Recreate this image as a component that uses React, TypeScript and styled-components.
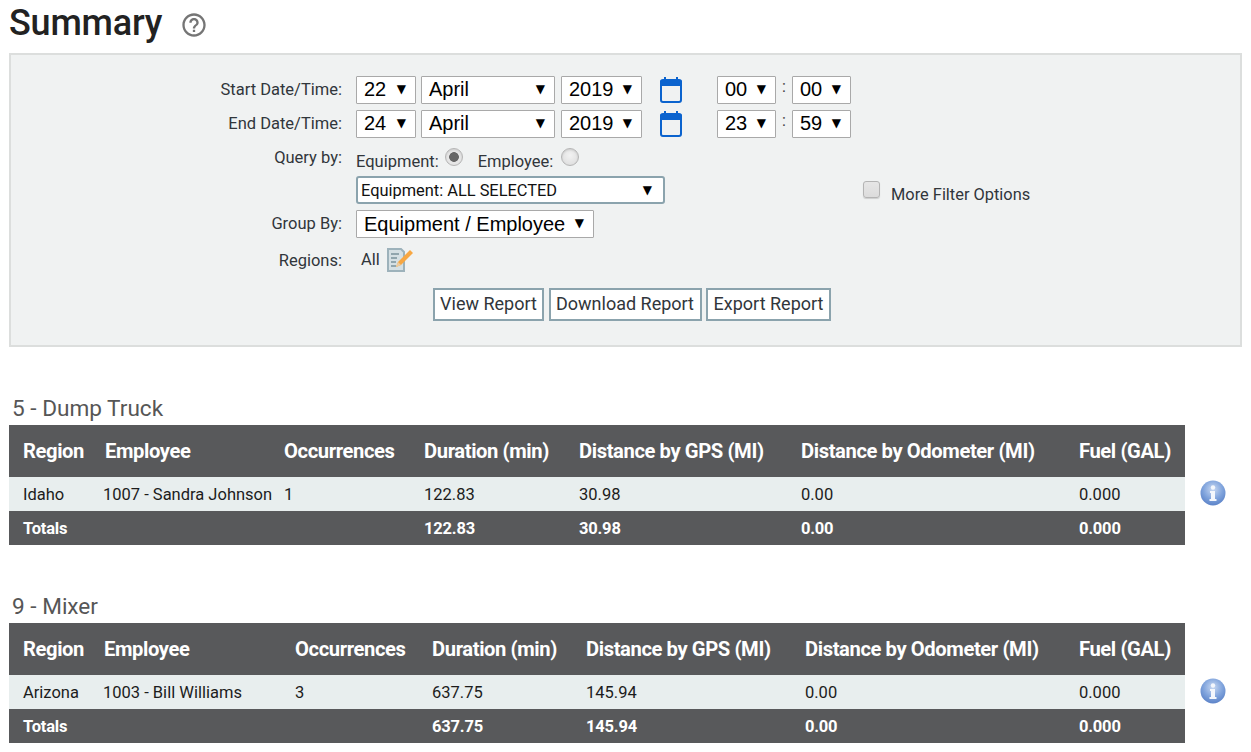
import React from "react";
import styled, { createGlobalStyle } from "styled-components";
import { MdHelpOutline } from "react-icons/md";

const Global = createGlobalStyle`
  html, body { margin: 0; padding: 0; background: #fff; overflow: hidden; }
  body { font-family: Roboto, "Liberation Sans", sans-serif; color: #31363b; }
`;
const Page = styled.div`
  width: 1251px; height: 752px; padding: 0 9px; box-sizing: border-box;
`;
const TitleBar = styled.div`
  height: 53px; display: flex; align-items: flex-start;
`;
const Title = styled.h1`
  margin: 0; font-size: 36px; line-height: 46px; font-weight: 500; color: #222; letter-spacing: -0.2px;
`;
const HelpIcon = styled(MdHelpOutline)`
  color: #757575; margin: 11px 0 0 18px; font-size: 28px;
`;
const Panel = styled.section`
  width: 1233px; height: 294px; box-sizing: border-box; background: #f0f2f2;
  border: 2px solid #dcdedd; padding-top: 21px;
`;
const Row = styled.div<{ $h: number }>`
  display: flex; align-items: flex-start; height: ${p => p.$h}px;
`;
const Label = styled.div<{ $top?: number }>`
  width: 331px; margin-right: 14px; flex: none; text-align: right; font-size: 16.5px; line-height: 20px;
  padding-top: ${p => p.$top ?? 4}px;
`;
const Select = styled.div<{ $w: number; $ml?: number; $big?: boolean }>`
  width: ${p => p.$w}px; height: 28px; margin-left: ${p => p.$ml ?? 0}px; flex: none; box-sizing: border-box;
  background: #fff; border: 1px solid #a9a9a9; border-radius: 1px; color: #000;
  font-family: "Liberation Sans", Arial, sans-serif; font-size: 20px; line-height: ${p => (p.$big ? 27 : 25)}px;
  display: flex; justify-content: space-between; padding: 0 9px 0 7px; white-space: nowrap;
`;
const Arrow = styled.span`
  font-family: "DejaVu Sans", sans-serif; font-size: 12px; line-height: 25px; color: #000;
`;
const CalendarIcon = styled.svg`
  width: 24px; height: 26px; margin: 1px 0 0 17px; flex: none;
`;
const Colon = styled.span`
  width: 16px; flex: none; text-align: center; font-size: 16px; line-height: 20px; color: #444; padding-top: 1px;
`;
const RadioText = styled.span<{ $ml?: number }>`
  font-size: 16.5px; line-height: 20px; margin-left: ${p => p.$ml ?? 0}px; padding-top: 8px;
`;
const Radio = styled.input<{ $ml?: number }>`
  appearance: none; width: 18px; height: 18px; margin: 4px 0 0 ${p => p.$ml ?? 6}px; box-sizing: border-box; border-radius: 50%;
  border: 1px solid #b5b5b5; background: radial-gradient(circle at 50% 40%, #f2f2f2, #dadada); position: relative;
  box-shadow: inset 0 1px 2px rgba(0,0,0,.12);
  &:checked { background: radial-gradient(circle, #666 0 4.5px, transparent 5.2px), #e6e6e6; }
`;
const MultiSelect = styled.div`
  width: 309px; height: 28px; box-sizing: border-box; flex: none; background: #fff; border: 2px solid #8ba3ad; border-radius: 3px;
  font-size: 16.4px; line-height: 25px; color: #111; padding: 0 11px 0 3px; display: flex; justify-content: space-between;
`;
const CheckBox = styled.input`
  appearance: none; width: 17px; height: 17px; margin: 5px 0 0 198px; box-sizing: border-box; flex: none;
  border: 1px solid #b4b4b4; border-radius: 3px; background: linear-gradient(#e6e6e6, #dcdcdc);
  box-shadow: 0 1px 1px rgba(0,0,0,.15);
`;
const CheckLabel = styled.label`
  font-size: 16.4px; line-height: 20px; margin: 9px 0 0 11px;
`;
const RegionValue = styled.span`
  font-size: 16.5px; line-height: 20px; margin-left: 5px; padding-top: 7px;
`;
const RegionIcon = styled.svg`
  width: 28px; height: 26px; margin: 4px 0 0 6px; flex: none;
`;
const Buttons = styled.div`
  display: flex; gap: 4.5px; margin: 11px 0 0 422px;
`;
const Btn = styled.button<{ $w: number }>`
  width: ${p => p.$w}px; height: 33px; box-sizing: border-box; padding: 0 0 2px; background: #fff; border: 2px solid #8ba3ad; border-radius: 0;
  font: 400 18px/26px Roboto, sans-serif; color: #31363b;
`;
const Section = styled.section<{ $mt: number }>`
  margin-top: ${p => p.$mt}px;
`;
const Heading = styled.h2`
  margin: 0 0 0 3px; height: 29px; font-size: 22.6px; font-weight: 400; line-height: 26px; color: #565656;
`;
const TableRow = styled.div`
  display: flex; align-items: flex-start;
`;
const Table = styled.table`
  width: 1176px; flex: none; table-layout: fixed; border-collapse: collapse;
`;
const Col = styled.col<{ $w: number }>`
  width: ${p => p.$w}px;
`;
const Th = styled.th<{ $pl?: number }>`
  height: 52px; padding: 0 0 0 ${p => p.$pl ?? 0}px; background: #58595b; color: #fff; text-align: left;
  font-size: 20.2px; font-weight: 700; letter-spacing: -0.4px; white-space: nowrap; vertical-align: middle;
`;
const Td = styled.td<{ $pl?: number }>`
  height: 34px; padding: 0 0 0 ${p => p.$pl ?? 0}px; background: #e8eeee; color: #1c1c1c; font-size: 16.5px; white-space: nowrap;
`;
const TotalCell = styled.td<{ $pl?: number }>`
  height: 34px; padding: 0 0 0 ${p => p.$pl ?? 0}px; background: #58595b; color: #fff; font-size: 16.5px; font-weight: 700; letter-spacing: -0.2px;
`;
const InfoIcon = styled.svg`
  width: 26px; height: 26px; margin: 55px 0 0 15px; flex: none;
`;

const Sel = ({ w, ml, v, big }: { w: number; ml?: number; v: string; big?: boolean }) => (
  <Select $w={w} $ml={ml} $big={big}>
    <span>{v}</span>
    <Arrow>▼</Arrow>
  </Select>
);

const Calendar = () => (
  <CalendarIcon viewBox="0 0 24 26">
    <rect x="2" y="3" width="20" height="22" rx="2" fill="none" stroke="#0b63ce" strokeWidth="2" />
    <rect x="1" y="3" width="22" height="6" rx="1.5" fill="#0b63ce" />
    <rect x="5" y="0" width="2" height="4" fill="#0b63ce" />
    <rect x="17" y="0" width="2" height="4" fill="#0b63ce" />
  </CalendarIcon>
);

const Info = () => (
  <InfoIcon viewBox="0 0 26 26">
    <defs>
      <radialGradient id="infoGrad" cx="50%" cy="35%" r="65%">
        <stop offset="0" stopColor="#c9d9f2" />
        <stop offset="0.6" stopColor="#7fa3dc" />
        <stop offset="1" stopColor="#5c83c8" />
      </radialGradient>
    </defs>
    <circle cx="13" cy="13" r="12.5" fill="url(#infoGrad)" />
    <circle cx="13" cy="7.5" r="2.2" fill="#f4f7fc" />
    <path d="M10 11h5v8h1.5v2h-7v-2H11v-6h-1z" fill="#f4f7fc" />
  </InfoIcon>
);

const DateRow = ({ label, d, h, m }: { label: string; d: string; h: string; m: string }) => (
  <Row $h={34}>
    <Label>{label}</Label>
    <Sel w={60} v={d} />
    <Sel w={134} ml={5} v="April" />
    <Sel w={81} ml={6} v="2019" />
    <Calendar />
    <Sel w={59} ml={34} v={h} />
    <Colon>:</Colon>
    <Sel w={59} v={m} />
  </Row>
);

type Rep = { title: string; widths: number[]; hdr: number[]; region: string; emp: string; occ: string; dur: string; gps: string; odo: string; fuel: string };
const COLS = ["Region", "Employee", "Occurrences", "Duration (min)", "Distance by GPS (MI)", "Distance by Odometer (MI)", "Fuel (GAL)"];
const Report = ({ r, mt }: { r: Rep; mt: number }) => (
  <Section $mt={mt}>
    <Heading>{r.title}</Heading>
    <TableRow>
      <Table>
        <colgroup>{r.widths.map((w, i) => <Col key={i} $w={w} />)}</colgroup>
        <thead>
          <tr>{COLS.map((c, i) => <Th key={c} $pl={r.hdr[i]}>{c}</Th>)}</tr>
        </thead>
        <tbody>
          <tr>
            <Td $pl={14}>{r.region}</Td><Td>{r.emp}</Td><Td>{r.occ}</Td><Td>{r.dur}</Td><Td>{r.gps}</Td><Td>{r.odo}</Td><Td>{r.fuel}</Td>
          </tr>
          <tr>
            <TotalCell $pl={14}>Totals</TotalCell><TotalCell /><TotalCell /><TotalCell>{r.dur}</TotalCell><TotalCell>{r.gps}</TotalCell><TotalCell>{r.odo}</TotalCell><TotalCell>{r.fuel}</TotalCell>
          </tr>
        </tbody>
      </Table>
      <Info />
    </TableRow>
  </Section>
);

export default function App() {
  return (
    <Page>
      <Global />
      <TitleBar>
        <Title>Summary</Title>
        <HelpIcon />
      </TitleBar>
      <Panel>
        <DateRow label="Start Date/Time:" d="22" h="00" m="00" />
        <DateRow label="End Date/Time:" d="24" h="23" m="59" />
        <Row $h={32}>
          <Label>Query by:</Label>
          <RadioText>Equipment:</RadioText>
          <Radio type="radio" name="q" defaultChecked />
          <RadioText $ml={15}>Employee:</RadioText>
          <Radio type="radio" name="q" $ml={8} />
        </Row>
        <Row $h={34}>
          <Label />
          <MultiSelect>
            <span>Equipment: ALL SELECTED</span>
            <Arrow>▼</Arrow>
          </MultiSelect>
          <CheckBox type="checkbox" id="more" />
          <CheckLabel htmlFor="more">More Filter Options</CheckLabel>
        </Row>
        <Row $h={33}>
          <Label>Group By:</Label>
          <Sel w={238} v="Equipment / Employee" big />
        </Row>
        <Row $h={34}>
          <Label $top={8}>Regions:</Label>
          <RegionValue>All</RegionValue>
          <RegionIcon viewBox="0 0 28 26">
            <path d="M2 2h13l3 3v19H2z" fill="#d5e0e4" stroke="#9db2bb" strokeWidth="2" />
            <path d="M5 7h8M5 11h6M5 15h5M5 19h5" stroke="#7b929c" strokeWidth="1.6" />
            <path d="M24 3l3 3-12 12-5 2 2-5z" fill="#f7a743" />
            <path d="M10 20l2-5 3 3z" fill="#eccb9f" />
          </RegionIcon>
        </Row>
        <Buttons>
          <Btn $w={111}>View Report</Btn>
          <Btn $w={153}>Download Report</Btn>
          <Btn $w={125}>Export Report</Btn>
        </Buttons>
      </Panel>
      <Report
        mt={49}
        r={{ title: "5 - Dump Truck", widths: [94, 181, 140, 155, 222, 278, 106], hdr: [14, 2, 0, 0, 0, 0, 0], region: "Idaho", emp: "1007 - Sandra Johnson", occ: "1", dur: "122.83", gps: "30.98", odo: "0.00", fuel: "0.000" }}
      />
      <Report
        mt={49}
        r={{ title: "9 - Mixer", widths: [94, 192, 137, 154, 219, 274, 106], hdr: [14, 1, 0, 0, 0, 0, 0], region: "Arizona", emp: "1003 - Bill Williams", occ: "3", dur: "637.75", gps: "145.94", odo: "0.00", fuel: "0.000" }}
      />
    </Page>
  );
}
